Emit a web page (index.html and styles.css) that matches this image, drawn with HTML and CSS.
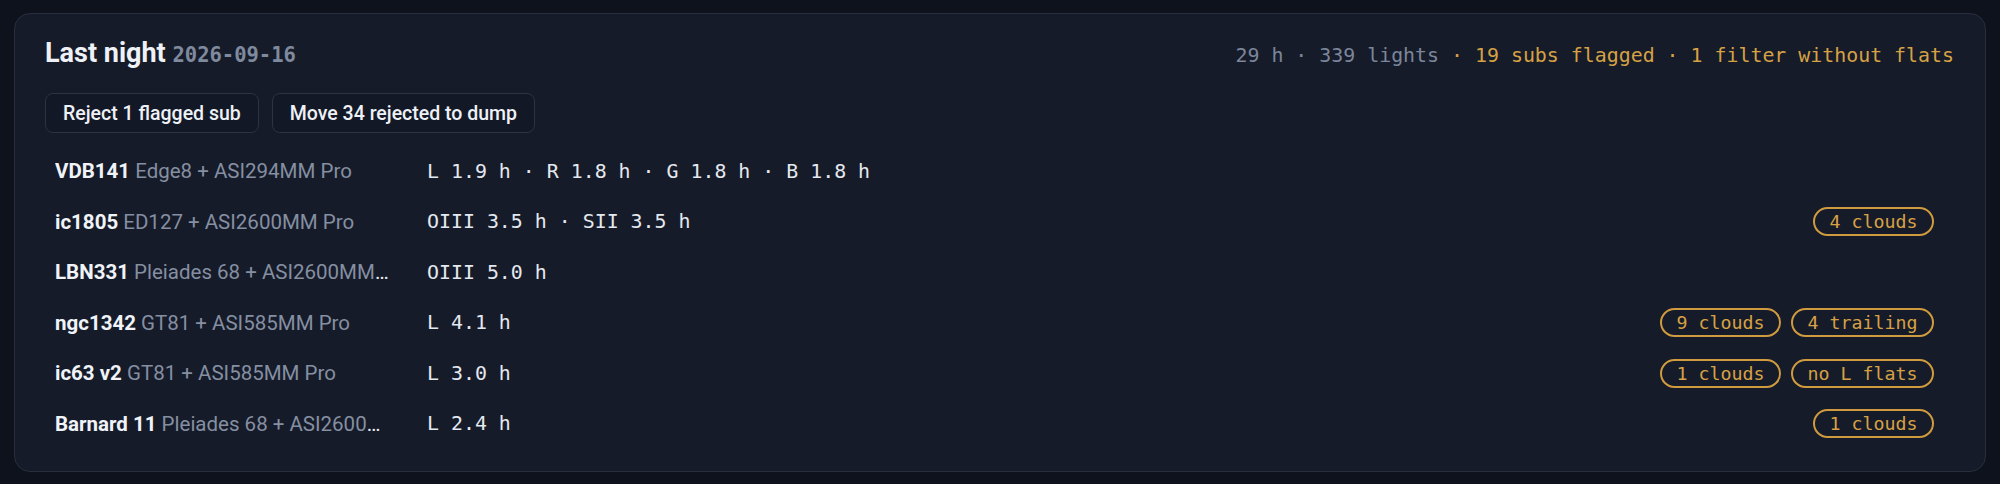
FILE: index.html
```html
<!DOCTYPE html>
<html lang="en">
<head>
<meta charset="utf-8">
<title>Last night</title>
<link rel="stylesheet" href="styles.css">
</head>
<body>
<div class="page">
  <section class="card">
    <header class="card-head">
      <h1 class="title">Last night <span class="date">2026-09-16</span></h1>
      <div class="stats">29 h · 339 lights <span class="warn">· 19 subs flagged · 1 filter without flats</span></div>
    </header>
    <div class="actions">
      <button class="btn">Reject 1 flagged sub</button>
      <button class="btn">Move 34 rejected to dump</button>
    </div>
    <div class="rows">
      <div class="row">
        <div class="name"><b>VDB141</b> <span class="meta">Edge8 + ASI294MM Pro</span></div>
        <div class="hours">L 1.9 h · R 1.8 h · G 1.8 h · B 1.8 h</div>
        <div class="tags"></div>
      </div>
      <div class="row">
        <div class="name"><b>ic1805</b> <span class="meta">ED127 + ASI2600MM Pro</span></div>
        <div class="hours">OIII 3.5 h · SII 3.5 h</div>
        <div class="tags"><span class="tag">4 clouds</span></div>
      </div>
      <div class="row">
        <div class="name"><b>LBN331</b> <span class="meta">Pleiades 68 + ASI2600MM Pro</span></div>
        <div class="hours">OIII 5.0 h</div>
        <div class="tags"></div>
      </div>
      <div class="row">
        <div class="name"><b>ngc1342</b> <span class="meta">GT81 + ASI585MM Pro</span></div>
        <div class="hours">L 4.1 h</div>
        <div class="tags"><span class="tag">9 clouds</span><span class="tag">4 trailing</span></div>
      </div>
      <div class="row">
        <div class="name"><b>ic63 v2</b> <span class="meta">GT81 + ASI585MM Pro</span></div>
        <div class="hours">L 3.0 h</div>
        <div class="tags"><span class="tag">1 clouds</span><span class="tag">no L flats</span></div>
      </div>
      <div class="row">
        <div class="name"><b>Barnard 11</b> <span class="meta">Pleiades 68 + ASI2600MM Pro</span></div>
        <div class="hours">L 2.4 h</div>
        <div class="tags"><span class="tag">1 clouds</span></div>
      </div>
    </div>
  </section>
</div>
</body>
</html>
```
FILE: styles.css
```css
* { box-sizing: border-box; }

html, body {
  margin: 0;
  background: #0e121c;
  font-family: Roboto, "Liberation Sans", sans-serif;
  color: #e9edf3;
}

.page {
  padding: 13px 14px 14px 14px;
}

.card {
  background: #161b29;
  border: 1px solid #282e3d;
  border-radius: 16px;
  padding: 23px 31px 22px 30px;
}

.card-head {
  display: flex;
  justify-content: space-between;
  align-items: baseline;
}

.title {
  margin: 0;
  font-size: 27px;
  line-height: 32px;
  font-weight: 700;
  color: #eef1f6;
}

.date {
  font-family: "DejaVu Sans Mono", "Liberation Mono", monospace;
  font-size: 20.5px;
  font-weight: 700;
  color: #7f8a9e;
}

.stats {
  font-family: "DejaVu Sans Mono", "Liberation Mono", monospace;
  font-size: 19.9px;
  color: #7b869a;
}

.warn { color: #d6a144; }

.actions {
  display: flex;
  gap: 13px;
  margin-top: 22px;
}

.btn {
  height: 40px;
  margin: 0;
  padding: 0 17px;
  background: #131826;
  border: 1px solid #2c3343;
  border-radius: 8px;
  color: #eef1f6;
  font-family: Roboto, "Liberation Sans", sans-serif;
  font-size: 19.5px;
  font-weight: 500;
}

.rows {
  margin-top: 13px;
}

.row {
  display: grid;
  grid-template-columns: 336px 1fr auto;
  column-gap: 36px;
  align-items: center;
  height: 50.5px;
  padding: 0 20px 0 10px;
}

.name {
  font-size: 20.5px;
  white-space: nowrap;
  overflow: hidden;
  text-overflow: ellipsis;
}

.name b {
  font-weight: 700;
  color: #f0f3f8;
}

.meta {
  color: #858fa2;
}

.hours {
  font-family: "DejaVu Sans Mono", "Liberation Mono", monospace;
  font-size: 19.9px;
  color: #e4e8ef;
  white-space: nowrap;
}

.tags {
  display: flex;
  gap: 10px;
  justify-content: flex-end;
}

.tag {
  font-family: "DejaVu Sans Mono", "Liberation Mono", monospace;
  font-size: 18.3px;
  line-height: 25px;
  padding: 0 14.5px;
  border: 2px solid #d09a3e;
  border-radius: 999px;
  color: #d6a144;
  white-space: nowrap;
}
```
